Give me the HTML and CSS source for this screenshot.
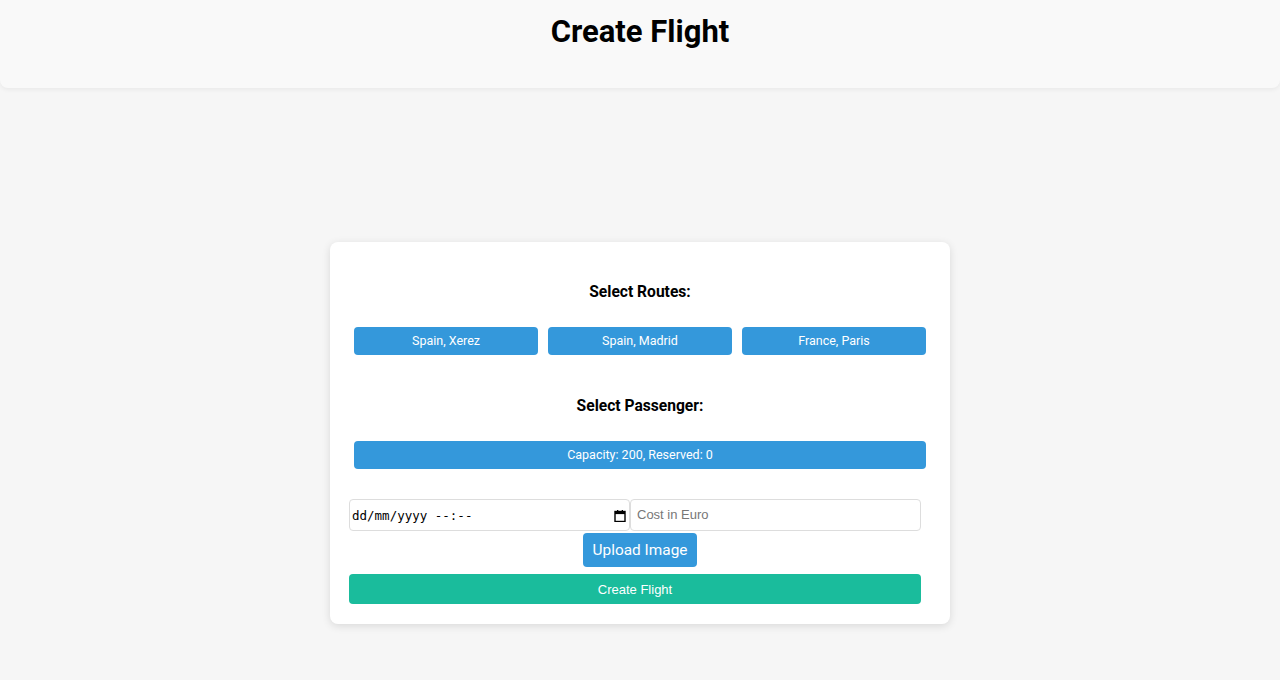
FILE: index.html
```html
<!DOCTYPE html>
<html>
<head>
<meta charset="utf-8">
<link rel="stylesheet" href="styles.css">
</head>
<body>
<header class="topbar">
  <h1 class="title">Create Flight</h1>
</header>
<main class="main">
  <section class="card">
    <h3 class="section-title">Select Routes:</h3>
    <div class="routes">
      <button class="pill">Spain, Xerez</button>
      <button class="pill">Spain, Madrid</button>
      <button class="pill">France, Paris</button>
    </div>
    <h3 class="section-title second">Select Passenger:</h3>
    <div class="passengers">
      <button class="pill wide">Capacity: 200, Reserved: 0</button>
    </div>
    <form class="form">
      <div class="inputs">
        <div class="date" role="textbox">
          <span class="date-text">dd/mm/yyyy --:--</span>
          <svg class="cal" width="12" height="12" viewBox="0 0 12 12" aria-hidden="true">
            <rect x="1" y="1.5" width="10" height="10" fill="none" stroke="#000" stroke-width="1.4"/>
            <rect x="1" y="1.5" width="10" height="2.6" fill="#000"/>
            <rect x="3" y="0" width="1.3" height="2" fill="#000"/>
            <rect x="7.7" y="0" width="1.3" height="2" fill="#000"/>
          </svg>
        </div>
        <input class="cost" type="text" placeholder="Cost in Euro">
      </div>
      <button type="button" class="upload">Upload Image</button>
      <button type="button" class="submit">Create Flight</button>
    </form>
  </section>
</main>
</body>
</html>
```
FILE: styles.css
```css
* { box-sizing: border-box; }
html, body { margin: 0; padding: 0; }
body {
  background: #f6f6f6;
  font-family: Roboto, "Liberation Sans", sans-serif;
  height: 680px;
  overflow: hidden;
}
.topbar {
  height: 88px;
  background: #f9f9f9;
  border-radius: 0 0 8px 8px;
  box-shadow: 0 2px 4px rgba(0,0,0,0.05);
  display: flex;
  justify-content: center;
}
.title {
  margin: 13px 0 0;
  font-size: 31px;
  font-weight: 700;
  line-height: 38px;
  color: #000;
}
.main {
  display: flex;
  justify-content: center;
  padding-top: 154px;
}
.card {
  width: 620px;
  background: #fff;
  border-radius: 8px;
  box-shadow: 0 2px 8px rgba(0,0,0,0.12);
  padding: 41px 24px 20px 24px;
}
.section-title {
  margin: 0;
  text-align: center;
  font-size: 15.6px;
  line-height: 19px;
  font-weight: 700;
  color: #000;
}
.section-title.second { margin-top: 42px; }
.routes, .passengers {
  margin-top: 25px;
  display: flex;
  gap: 10px;
}
.pill {
  flex: 1;
  height: 28px;
  border: none;
  border-radius: 4px;
  background: #3498db;
  color: #fff;
  font-family: Roboto, "Liberation Sans", sans-serif;
  font-size: 12.5px;
  padding: 0 0 1px;
}
.form {
  margin-top: 30px;
  display: flex;
  flex-direction: column;
  align-items: center;
}
.inputs {
  display: flex;
  align-self: stretch;
  margin: 0 5px 0 -5px;
}
.date {
  width: 281px;
  height: 32px;
  border: 1px solid #ddd;
  border-radius: 4px;
  background: #fff;
  display: flex;
  align-items: center;
  justify-content: space-between;
  padding: 0 3px 0 2px;
}
.date-text {
  font-family: "DejaVu Sans Mono", monospace;
  font-size: 12.5px;
  color: #000;
  white-space: pre;
}
.cal { display: block; margin-top: 1px; }
.cost {
  flex: 1;
  height: 32px;
  border: 1px solid #ddd;
  border-radius: 4px;
  font-family: "Liberation Sans", Arial, sans-serif;
  font-size: 13px;
  padding: 0 6px 1px;
}
.cost::placeholder { color: #777; }
.upload {
  margin-top: 2px;
  height: 34px;
  padding: 0 10px;
  border: none;
  border-radius: 4px;
  background: #3498db;
  color: #fff;
  font-family: Roboto, sans-serif;
  font-size: 15.4px;
}
.submit {
  margin: 7px 5px 0 -5px;
  align-self: stretch;
  height: 30px;
  border: none;
  border-radius: 4px;
  background: #1abc9c;
  color: #fff;
  font-family: "Liberation Sans", Arial, sans-serif;
  font-size: 13px;
}
```
